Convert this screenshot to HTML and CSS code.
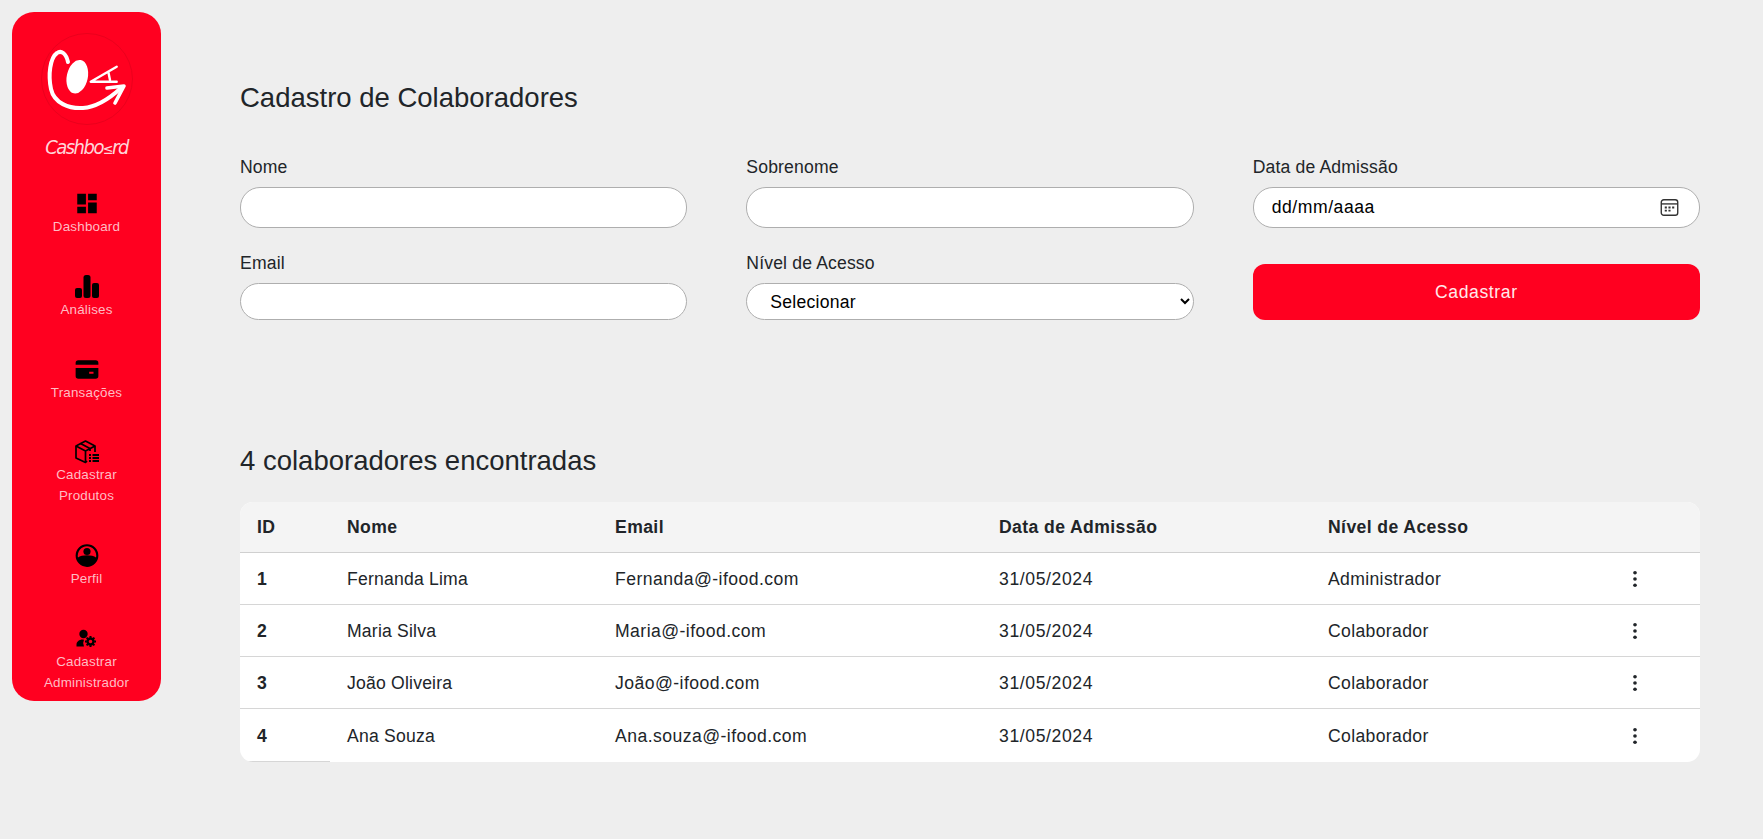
FILE: index.html
```html
<!DOCTYPE html>
<html lang="pt-BR">
<head>
  <meta charset="UTF-8" />
  <meta name="viewport" content="width=device-width, initial-scale=1.0"/>
  <title>Cadastro de Colaboradores</title>
  <link rel="stylesheet" href="styles.css">
</head>
<body>
  <div class="app">
    <aside class="sidebar">
      <div class="logo">
        <svg class="logo-mark" viewBox="0 0 92 92" fill="none" stroke="#fff" stroke-linecap="round" stroke-linejoin="round">
          <circle cx="46" cy="46" r="45.5" stroke="#ea001d" stroke-width="1"/>
          <path d="M27 29C25 20 20 17 16 20C9 25 7 42 10 56C13 70 28 76 42 75C56 74 68 66 80 55" stroke-width="4"/>
          <path d="M66 55L83 53L74 70" stroke-width="3.600"/>
          <ellipse cx="36.300" cy="43.700" rx="10.500" ry="17" transform="rotate(12 36.300 43.700)" fill="#fff" stroke="none"/>
          <path d="M75.700 33.700L49.700 48.700H75.700M67.300 38.700L69 47" stroke-width="2.400"/>
        </svg>
        <div class="logo-name">Cashbo<span class="logo-a">≤</span>rd</div>
      </div>

      <nav class="menu">
        <a class="menu-item">
          <svg class="menu-icon" viewBox="0 0 24 24"><path d="M3 13h8V3H3v10zm0 8h8v-6H3v6zm10 0h8V11h-8v10zm0-18v6h8V3h-8z"/></svg>
          <span>Dashboard</span>
        </a>
        <a class="menu-item">
          <svg class="menu-icon" viewBox="-1 -2 26 27"><rect x="0" y="13" width="7" height="10" rx="2"/><rect x="8.500" y="0" width="7" height="23" rx="2.500"/><rect x="17" y="8" width="7" height="15" rx="2"/></svg>
          <span>Análises</span>
        </a>
        <a class="menu-item">
          <svg class="menu-icon" viewBox="0 0 24 24"><path d="M4 3.500h16a2.500 2.500 0 0 1 2.500 2.500v1.500h-21V6A2.500 2.500 0 0 1 4 3.500zM1.500 10.500h21V18a2.500 2.500 0 0 1-2.500 2.500H4A2.500 2.500 0 0 1 1.500 18zM14 14v2h4v-2z" fill-rule="evenodd"/></svg>
          <span>Transações</span>
        </a>
        <a class="menu-item menu-item-wide">
          <svg class="menu-icon" viewBox="0 0 26 27">
            <path class="icon-line" d="M13 23L11.500 24.500L2 20V8L11.500 3L21 8V14"/>
            <path class="icon-line" d="M2 8L11.500 13L21 8M11.500 13V24M6.500 5.500L16 10.500V13"/>
            <path class="icon-line icon-list" d="M15 17h2M15 20h2M15 23h2M18.500 17H25M18.500 20H25M18.500 23H25"/>
          </svg>
          <span>Cadastrar<br>Produtos</span>
        </a>
        <a class="menu-item">
          <svg class="menu-icon" viewBox="0 0 24 24"><path d="M12 1.500a10.500 10.500 0 1 0 0 21 10.500 10.500 0 0 0 0-21zm0 2a8.500 8.500 0 0 1 8.300 10.300c-1.500-1.400-5-2-8.300-2s-6.800.6-8.300 2A8.500 8.500 0 0 1 12 3.500z" fill-rule="evenodd"/><circle cx="12" cy="8.300" r="3.300"/></svg>
          <span>Perfil</span>
        </a>
        <a class="menu-item menu-item-wide">
          <svg class="menu-icon" viewBox="0 0 26 27">
            <circle cx="9.500" cy="9" r="4.200"/>
            <path d="M8.500 14.500c-3.300 0-6 2.300-6 5v2h7.500a7.500 7.500 0 0 1 0-6.800z"/>
            <circle class="icon-line icon-gear" cx="16.500" cy="16.500" r="3"/>
            <path class="icon-line icon-teeth" d="M16.500 11v1.800M16.500 20.200V22M11 16.500h1.800M20.200 16.500H22M12.600 12.600l1.300 1.300M19.100 19.100l1.300 1.300M12.600 20.400l1.300-1.300M19.100 13.900l1.300-1.300"/>
          </svg>
          <span>Cadastrar<br>Administrador</span>
        </a>
      </nav>
    </aside>

    <main class="content">
      <h2 class="title">Cadastro de Colaboradores</h2>

      <form class="form-grid">
        <div class="field">
          <label for="nome">Nome</label>
          <input class="input input-tall" id="nome" type="text">
        </div>
        <div class="field">
          <label for="sobrenome">Sobrenome</label>
          <input class="input input-tall" id="sobrenome" type="text">
        </div>
        <div class="field">
          <label for="admissao">Data de Admissão</label>
          <div class="date-wrap">
            <input class="input input-tall input-date" id="admissao" type="text" placeholder="dd/mm/aaaa">
            <svg class="date-icon" viewBox="0 0 18 18" fill="none" stroke="#333" stroke-width="1.300">
              <rect x="1.200" y="1.700" width="15.600" height="14.600" rx="2.400"/>
              <path d="M1.200 5.600h15.600"/>
              <path d="M4.500 9h2M8 9h2M11.500 9h2M4.500 12h2M8 12h2" stroke-width="1.800"/>
            </svg>
          </div>
        </div>
        <div class="field">
          <label for="email">Email</label>
          <input class="input" id="email" type="text">
        </div>
        <div class="field">
          <label for="nivel">Nível de Acesso</label>
          <select class="input input-select" id="nivel">
            <option>Selecionar</option>
          </select>
        </div>
        <div class="field field-end">
          <button class="btn-primary" type="button">Cadastrar</button>
        </div>
      </form>

      <h2 class="title title-list">4 colaboradores encontradas</h2>

      <div class="table-card">
        <table class="data-table">
          <colgroup>
            <col class="col-id"><col class="col-nome"><col class="col-email"><col class="col-data"><col class="col-nivel"><col class="col-acao">
          </colgroup>
          <thead>
            <tr><th>ID</th><th>Nome</th><th>Email</th><th>Data de Admissão</th><th>Nível de Acesso</th><th></th></tr>
          </thead>
          <tbody>
            <tr>
              <td class="cell-id">1</td><td class="cell-nome">Fernanda Lima</td><td class="cell-email">Fernanda@-ifood.com</td><td class="cell-data">31/05/2024</td><td class="cell-nivel">Administrador</td>
              <td class="cell-acao"><svg class="dots" viewBox="0 0 24 24"><circle cx="12" cy="4.500" r="2.200"/><circle cx="12" cy="12" r="2.200"/><circle cx="12" cy="19.500" r="2.200"/></svg></td>
            </tr>
            <tr>
              <td class="cell-id">2</td><td class="cell-nome">Maria Silva</td><td class="cell-email">Maria@-ifood.com</td><td class="cell-data">31/05/2024</td><td class="cell-nivel">Colaborador</td>
              <td class="cell-acao"><svg class="dots" viewBox="0 0 24 24"><circle cx="12" cy="4.500" r="2.200"/><circle cx="12" cy="12" r="2.200"/><circle cx="12" cy="19.500" r="2.200"/></svg></td>
            </tr>
            <tr>
              <td class="cell-id">3</td><td class="cell-nome">João Oliveira</td><td class="cell-email">João@-ifood.com</td><td class="cell-data">31/05/2024</td><td class="cell-nivel">Colaborador</td>
              <td class="cell-acao"><svg class="dots" viewBox="0 0 24 24"><circle cx="12" cy="4.500" r="2.200"/><circle cx="12" cy="12" r="2.200"/><circle cx="12" cy="19.500" r="2.200"/></svg></td>
            </tr>
            <tr>
              <td class="cell-id">4</td><td class="cell-nome">Ana Souza</td><td class="cell-email">Ana.souza@-ifood.com</td><td class="cell-data">31/05/2024</td><td class="cell-nivel">Colaborador</td>
              <td class="cell-acao"><svg class="dots" viewBox="0 0 24 24"><circle cx="12" cy="4.500" r="2.200"/><circle cx="12" cy="12" r="2.200"/><circle cx="12" cy="19.500" r="2.200"/></svg></td>
            </tr>
          </tbody>
        </table>
      </div>
    </main>
  </div>
</body>
</html>
```

FILE: styles.css
```css
* {
  box-sizing: border-box;
}

html, body {
  height: 100%;
}

body {
  margin: 0;
  background: #eeeeee;
  color: #212529;
  font-family: 'Liberation Sans', Arial, sans-serif;
  font-size: 17.6px;
  overflow: hidden;
}

.app {
  display: flex;
  align-items: flex-start;
}

/* sidebar */
.sidebar {
  flex: 0 0 149px;
  height: 689px;
  margin: 12px 0 0 12px;
  padding-top: 21px;
  background: #ff0020;
  border-radius: 22px;
}

.logo {
  display: flex;
  flex-direction: column;
  align-items: center;
}

.logo-mark {
  display: block;
  width: 92px;
  height: 92px;
}

.logo-name {
  height: 30px;
  margin-top: 7px;
  color: #ffd5da;
  font-family: 'DejaVu Sans Condensed', 'DejaVu Sans', sans-serif;
  font-size: 20px;
  font-style: italic;
  line-height: 30px;
  letter-spacing: -1.5px;
  white-space: nowrap;
}

.logo-a {
  font-size: 14px;
  font-style: normal;
}

.menu {
  display: flex;
  flex-direction: column;
  gap: 35.8px;
  margin-top: 28px;
}

.menu-item {
  display: flex;
  flex-direction: column;
  align-items: center;
  color: #ffbcc4;
  font-size: 13.4px;
  line-height: 21px;
  letter-spacing: 0.2px;
  text-align: center;
}

.menu-item span {
  display: block;
  margin-top: -1px;
}

.menu-icon {
  display: block;
  width: 26px;
  height: 27px;
  fill: #000;
}

.menu-icon .icon-line {
  fill: none;
  stroke: #000;
  stroke-width: 1.7;
  stroke-linejoin: round;
}

.menu-icon .icon-list {
  stroke-width: 2;
}

.menu-icon .icon-gear {
  stroke-width: 2.4;
}

.menu-icon .icon-teeth {
  stroke-width: 2;
}

/* main */
.content {
  flex: 1;
  padding: 81px 63px 0 79px;
}

.title {
  margin: 0;
  font-size: 27.5px;
  font-weight: 400;
  line-height: 33px;
}

.title-list {
  margin: 124px 0 25px;
}

.form-grid {
  display: grid;
  grid-template-columns: repeat(3, 1fr);
  column-gap: 59px;
  row-gap: 25px;
  margin-top: 43px;
}

.field label {
  display: block;
  margin-bottom: 9px;
  line-height: 21px;
  letter-spacing: 0.15px;
}

.field-end {
  display: flex;
  align-items: flex-end;
}

.input {
  display: block;
  width: 100%;
  height: 37px;
  padding: 0 19px;
  background: #fff;
  border: 1px solid #aeaeae;
  border-radius: 20px;
  color: #000;
  font-family: inherit;
  font-size: 17.6px;
  letter-spacing: 0.25px;
  outline: none;
}

.input-tall {
  height: 41px;
}

.input-date {
  padding-left: 18px;
  letter-spacing: 0.55px;
}

.input-date::placeholder {
  color: #000;
  opacity: 1;
}

.date-wrap {
  position: relative;
}

.date-icon {
  position: absolute;
  top: 11px;
  right: 21px;
  width: 19px;
  height: 19px;
}

.btn-primary {
  width: 100%;
  height: 56px;
  background: #ff0020;
  border: none;
  border-radius: 12px;
  color: #ffe9eb;
  font-family: inherit;
  font-size: 17.6px;
  letter-spacing: 0.6px;
  cursor: pointer;
}

/* table */
.table-card {
  background: #fff;
  border-radius: 13px;
  overflow: hidden;
}

.data-table {
  width: 100%;
  border-collapse: separate;
  border-spacing: 0;
  table-layout: fixed;
  letter-spacing: 0.4px;
}

.col-id { width: 90px; }
.col-nome { width: 268px; }
.col-email { width: 384px; }
.col-data { width: 329px; }
.col-nivel { width: 309px; }
.col-acao { width: 80px; }

.data-table th {
  height: 51px;
  padding: 0 17px;
  background: #f4f4f4;
  border-bottom: 1px solid #d0d0d0;
  font-weight: 700;
  text-align: left;
}

.data-table td {
  height: 52px;
  padding: 2px 17px 0;
  border-bottom: 1px solid #d6d6d6;
}

.data-table tbody tr:last-child td {
  height: 53px;
  border-bottom: none;
}

.data-table tbody tr:last-child .cell-id {
  border-bottom: 1px solid #d6d6d6;
}

.cell-id {
  font-weight: 700;
}

.cell-nome {
  letter-spacing: 0.2px;
}

.cell-email {
  letter-spacing: 0.45px;
}

.cell-data {
  letter-spacing: 0.6px;
}

.cell-nivel {
  letter-spacing: 0.35px;
}

.data-table .cell-acao {
  padding: 0 0 0 5px;
}

.dots {
  display: block;
  width: 20px;
  height: 20px;
  fill: #212529;
}
```
